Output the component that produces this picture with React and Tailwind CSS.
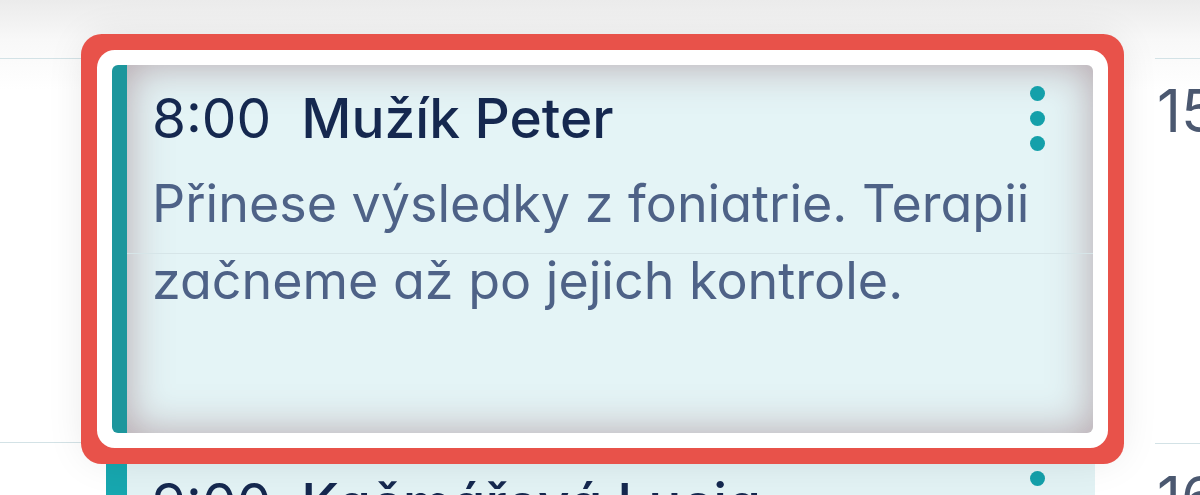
export default function App() {
  return (
    <div className="w-[1200px] h-[495px] overflow-hidden flex bg-[linear-gradient(to_bottom,#ebebeb_0px,#f8f8f8_40px,#ffffff_90px)] font-['Inter',sans-serif] [font-feature-settings:'cv11']">
      {/* left time gutter */}
      <div className="w-[106px] shrink-0 flex flex-col">
        <div className="h-[58px] shrink-0" />
        <div className="w-[83px] h-px shrink-0 bg-[#d3e2e6]" />
        <div className="h-[383px] shrink-0" />
        <div className="w-[83px] h-px shrink-0 bg-[#d3e2e6]" />
      </div>

      {/* events column */}
      <div className="w-[989px] shrink-0 flex flex-col pt-[65px]">
        <div className="relative z-10 shrink-0 ml-[6px] mr-[2px] h-[368px] rounded-[6px] bg-[#e4f4f6] border-l-[15px] border-[#1d969c] shadow-[inset_0_0_40px_rgba(135,85,95,0.5),0_0_0_15px_#ffffff,0_0_0_31px_#e8524a,0_0_40px_26px_rgba(0,0,0,0.10)]">
          <div className="absolute left-0 right-0 top-[188px] h-px bg-[#d6e5e8]" />
          <div className="relative flex flex-col pl-[25px] pr-[20px] pt-[20px]">
            <div className="flex gap-[30px] text-[55px] leading-[66px] text-[#15284f]">
              <span className="font-normal">8:00</span>
              <span className="font-medium">Mužík Peter</span>
            </div>
            <p className="mt-[14px] text-[52px] leading-[77px] text-[#4e6287]">
              Přinese výsledky z foniatrie. Terapii začneme až po jejich kontrole.
            </p>
          </div>
          <div className="absolute right-[48px] top-[21px] flex flex-col gap-[10px]">
            <span className="w-[15px] h-[15px] rounded-full bg-[#14a0aa]" />
            <span className="w-[15px] h-[15px] rounded-full bg-[#14a0aa]" />
            <span className="w-[15px] h-[15px] rounded-full bg-[#14a0aa]" />
          </div>
        </div>

        <div className="relative mt-[17px] shrink-0 h-[200px] rounded-[6px] bg-[#e2f2f4] border-l-[21px] border-[#17a7af]">
          <div className="flex gap-[30px] pl-[25px] pt-[20px] text-[55px] leading-[66px] text-[#15284f]">
            <span className="font-normal">9:00</span>
            <span className="font-medium">Kačmářová Lucia</span>
          </div>
          <div className="absolute right-[50px] top-[21px] flex flex-col gap-[10px]">
            <span className="w-[15px] h-[15px] rounded-full bg-[#14a0aa]" />
            <span className="w-[15px] h-[15px] rounded-full bg-[#14a0aa]" />
            <span className="w-[15px] h-[15px] rounded-full bg-[#14a0aa]" />
          </div>
        </div>
      </div>

      {/* next day column */}
      <div className="flex-1 flex flex-col">
        <div className="h-[58px] shrink-0" />
        <div className="ml-[60px] h-px shrink-0 bg-[#d3e2e6]" />
        <div className="ml-[62px] mt-[23px] h-[58px] shrink-0 text-[59px] leading-[58px] text-[#4b5870]">15</div>
        <div className="h-[303px] shrink-0" />
        <div className="ml-[60px] h-px shrink-0 bg-[#d3e2e6]" />
        <div className="ml-[62px] mt-[25px] shrink-0 text-[59px] leading-[58px] text-[#4b5870]">16</div>
      </div>
    </div>
  )
}
